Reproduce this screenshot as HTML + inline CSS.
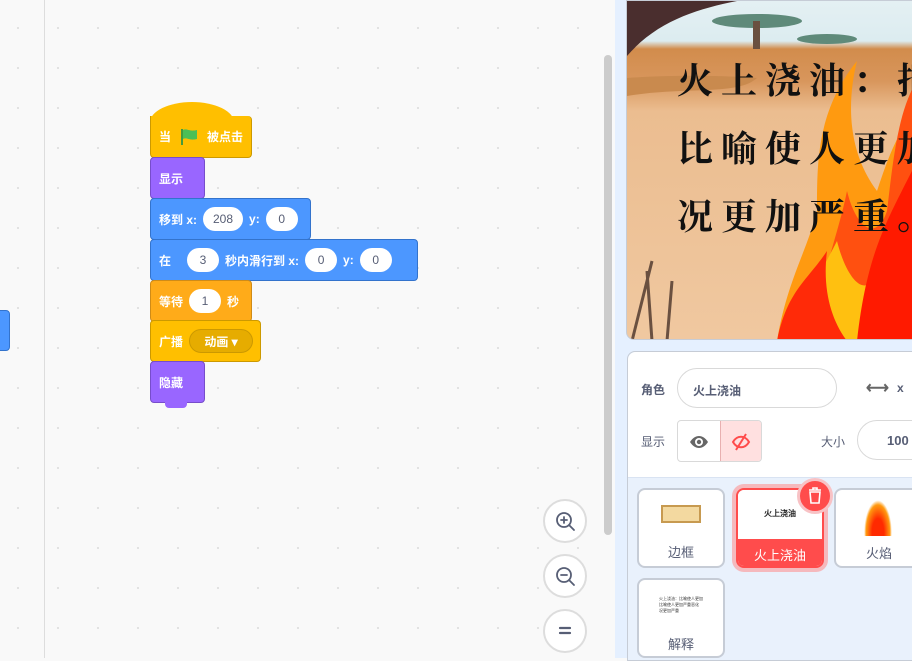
<!DOCTYPE html>
<html><head><meta charset="utf-8"><style>
*{box-sizing:border-box;margin:0;padding:0}
body{width:912px;height:658px;overflow:hidden;position:relative;background:#f9f9f9;font-family:"Liberation Sans","Noto Sans CJK SC",sans-serif}
.ws{position:absolute;left:0;top:0;width:615px;height:658px;background-color:#f9f9f9;background-image:radial-gradient(circle,#ddd 0.8px,transparent 1.2px);background-size:40px 40px;background-position:-2px 8px}
.vl{position:absolute;left:44px;top:0;width:1px;height:658px;background:#ddd}
.b{position:absolute;color:#fff;font-weight:bold;font-size:12px;display:flex;align-items:center;padding-left:8px;border-radius:4px;white-space:nowrap}
.in{background:#fff;color:#575e75;font-weight:normal;border-radius:12px;height:24px;display:inline-flex;align-items:center;justify-content:center;margin:0 6px;font-size:12px;flex:none}
.zb{position:absolute;left:543px;width:44px;height:44px;border-radius:50%;border:2px solid #ddd;background:#fff}
.rt{position:absolute;left:615px;top:0;width:297px;height:658px;background:#e5f0ff}
.spr{position:absolute;width:88px;height:80px;border:2px solid #c6ccd6;border-radius:8px;background:#fff;text-align:center;font-size:13px;color:#575e75}
</style></head><body>
<div class="ws"></div><div class="vl"></div>
<div style="position:absolute;left:-6px;top:310px;width:16px;height:41px;background:#4c97ff;border-radius:4px;border:1px solid #3373cc"></div>
<div style="position:absolute;left:604px;top:55px;width:8px;height:480px;background:#ccc;border-radius:4px"></div>

<div style="position:absolute;left:150px;top:102px;width:84px;height:40px;background:#ffbf00;border-radius:45px 45px 0 0/22px 22px 0 0"></div>
<div class="b" style="left:150px;top:116px;width:102px;height:42px;background:#ffbf00;border:1px solid #cc9900;border-top:none;border-radius:0 4px 4px 4px">当 <svg width="20" height="18" style="margin:0 8px" viewBox="0 0 20 18"><rect x="2" y="1" width="2" height="16" fill="#45993d"/><path d="M4 2c4-2 6 2 14 0v9c-8 2-10-2-14 0z" fill="#4cbf56"/></svg> 被点击</div>
<div class="b" style="left:150px;top:157px;width:55px;height:42px;background:#9966ff;border:1px solid #774dcb">显示</div>
<div class="b" style="left:150px;top:198px;width:161px;height:42px;background:#4c97ff;border:1px solid #3373cc">移到 x:<span class="in" style="width:40px">208</span>y:<span class="in" style="width:32px">0</span></div>
<div class="b" style="left:150px;top:239px;width:268px;height:42px;background:#4c97ff;border:1px solid #3373cc">在 <span class="in" style="width:32px;margin-left:16px">3</span>秒内滑行到 x:<span class="in" style="width:32px">0</span>y:<span class="in" style="width:32px">0</span></div>
<div class="b" style="left:150px;top:280px;width:102px;height:42px;background:#ffab19;border:1px solid #cf8b17">等待<span class="in" style="width:32px">1</span>秒</div>
<div class="b" style="left:150px;top:320px;width:111px;height:42px;background:#ffbf00;border:1px solid #cc9900">广播<span class="in" style="width:64px;background:#e6ac00;color:#fff;border:1px solid #cc9900;font-weight:bold">动画 ▾</span></div>
<div class="b" style="left:150px;top:361px;width:55px;height:42px;background:#9966ff;border:1px solid #774dcb">隐藏</div>
<div style="position:absolute;left:165px;top:400px;width:22px;height:8px;background:#9966ff;border-radius:0 0 4px 4px"></div>

<div class="zb" style="top:499px"><svg width="40" height="40" viewBox="0 0 40 40"><circle cx="19" cy="19" r="7" fill="none" stroke="#575e75" stroke-width="1.8"/><path d="M24 24l5 5M16 19h6M19 16v6" stroke="#575e75" stroke-width="1.8" stroke-linecap="round"/></svg></div>
<div class="zb" style="top:554px"><svg width="40" height="40" viewBox="0 0 40 40"><circle cx="19" cy="19" r="7" fill="none" stroke="#575e75" stroke-width="1.8"/><path d="M24 24l5 5M16 19h6" stroke="#575e75" stroke-width="1.8" stroke-linecap="round"/></svg></div>
<div class="zb" style="top:609px"><svg width="40" height="40" viewBox="0 0 40 40"><path d="M15 17h10M15 22h10" stroke="#575e75" stroke-width="2.2" stroke-linecap="round"/></svg></div>

<div class="rt"></div>
<div style="position:absolute;left:626px;top:0;width:290px;height:340px;border-radius:0 0 0 8px;overflow:hidden;background:linear-gradient(#e4f0f3 0,#dcecf0 40px,#d28c4c 48px,#d8965c 80px,#ebbd90 110px,#f0c8a0 340px);border:1px solid #c6ccd6">
<svg width="290" height="340" style="position:absolute;left:0;top:0">
<path d="M0 0h110c-40 8-80 20-110 55z" fill="#4a2e2e"/>
<ellipse cx="130" cy="20" rx="45" ry="7" fill="#5f8a7a"/><rect x="126" y="20" width="7" height="28" fill="#6a5040"/>
<ellipse cx="200" cy="38" rx="30" ry="5" fill="#5f8a7a"/>
<path d="M0 95c60-10 110 0 130-18 0 0-60-5-130 0z" fill="#c98a4e"/>
<path d="M5 340l20-80M25 340l-5-70M40 340l5-60" stroke="#6a5040" stroke-width="3"/>
<path d="M150 340c10-60 30-90 40-130 0-50 0-100 40-150-10 40-10 90 20 130 10-30 20-60 40-80v230z" fill="#ff9a10"/>
<path d="M190 340c0-60 20-100 30-150 10 40 30 50 40 20 5-40 10-100 30-130v260z" fill="#ff5010"/>
<path d="M170 340c10-50 25-70 40-100 10 40 30 60 40 30 10-40 20-50 40-60v130z" fill="#ffc010"/>
<path d="M150 340c10-50 30-60 50-90 -5 40 5 70 20 90z" fill="#ff2a08"/>
<path d="M230 340c10-90 30-120 60-180v180z" fill="#ff1a00"/>
</svg>
<div style="position:absolute;left:50px;top:44px;font:bold 36px 'Noto Serif CJK SC',serif;letter-spacing:8px;color:#111;line-height:68px;white-space:nowrap">火上浇油：把<br>比喻使人更加<br>况更加严重。</div>
</div>

<div style="position:absolute;left:627px;top:351px;width:290px;height:310px;background:#e9f1fc;border:1px solid #c6ccd6;border-radius:8px 0 0 0"></div>
<div style="position:absolute;left:628px;top:352px;width:290px;height:126px;background:#fff;border-bottom:1px solid #d9e3f2;border-radius:8px 0 0 0;font-size:12px;color:#575e75">
<span style="position:absolute;left:13px;top:29px;font-weight:bold">角色</span>
<div style="position:absolute;left:49px;top:16px;width:160px;height:40px;border:1px solid #d9d9d9;border-radius:20px;padding:13px 0 0 15px;font-weight:bold;color:#575e75;font-size:12px">火上浇油</div>
<span style="position:absolute;left:238px;top:26px;font-size:16px;font-weight:bold;color:#666">⟷</span><span style="position:absolute;left:269px;top:29px;font-weight:bold">x</span>
<span style="position:absolute;left:13px;top:81px">显示</span>
<div style="position:absolute;left:49px;top:68px;width:85px;height:42px;border:1px solid #d9d9d9;border-radius:4px;overflow:hidden"><div style="position:absolute;left:42px;top:0;width:43px;height:42px;background:#ffe0e0;border-left:1px solid #e8b0b0"></div>
<svg style="position:absolute;left:11px;top:12px" width="20" height="18" viewBox="0 0 20 18"><path d="M1 9c5-8 13-8 18 0-5 8-13 8-18 0z" fill="#666"/><circle cx="10" cy="9" r="4" fill="#fff"/><circle cx="10" cy="9" r="2.2" fill="#666"/></svg>
<svg style="position:absolute;left:53px;top:12px" width="20" height="18" viewBox="0 0 20 18"><path d="M2 9c4-7 12-7 16 0-4 7-12 7-16 0z" fill="none" stroke="#ff4c4c" stroke-width="2"/><path d="M15 1L5 17" stroke="#ff4c4c" stroke-width="2"/></svg></div>
<span style="position:absolute;left:193px;top:81px">大小</span>
<div style="position:absolute;left:229px;top:68px;width:80px;height:40px;border:1px solid #d9d9d9;border-radius:20px;padding:12px 0 0 29px;font-weight:bold;font-size:13px">100</div>
</div>

<div class="spr" style="left:637px;top:488px"><div style="margin:15px auto 0;width:40px;height:18px;background:#f3d9a0;border:2px solid #c79a50"></div><div style="margin-top:19px">边框</div></div>
<div style="position:absolute;left:732px;top:484px;width:96px;height:88px;border-radius:12px;background:#f5b9bd"></div>
<div class="spr" style="left:736px;top:488px;border-color:#ff4c4c;overflow:hidden"><div style="height:49px;background:#fff;font:bold 8px serif;color:#222;padding-top:18px">火上浇油</div><div style="background:#ff4c4c;color:#fff;height:30px;padding-top:6px">火上浇油</div></div>
<div style="position:absolute;left:797px;top:478px;width:36px;height:36px;border-radius:50%;background:#ff4c4c;border:3px solid #f8c2c5"><svg width="30" height="30" viewBox="0 0 30 30"><path d="M9 9h12M13 9V7h4v2M10 11l1 11h8l1-11z" fill="none" stroke="#fff" stroke-width="1.6"/><path d="M13 14l4 4M17 14l-4 4" stroke="#ff4c4c" stroke-width="1.4"/></svg></div>
<div class="spr" style="left:834px;top:488px;width:90px"><div style="margin:10px 0 0 28px;width:28px;height:36px;background:radial-gradient(ellipse at 50% 90%,#ff2a00 30%,#ff9a10 60%,transparent 70%)"></div><div style="margin-top:7px">火焰</div></div>
<div class="spr" style="left:637px;top:578px"><div style="font-size:4px;color:#333;line-height:6px;padding:16px 20px 0;text-align:left">火上浇油：比喻使人更加<br>比喻使人更加严重恶化<br>况更加严重</div><div style="margin-top:20px">解释</div></div>
</body></html>
